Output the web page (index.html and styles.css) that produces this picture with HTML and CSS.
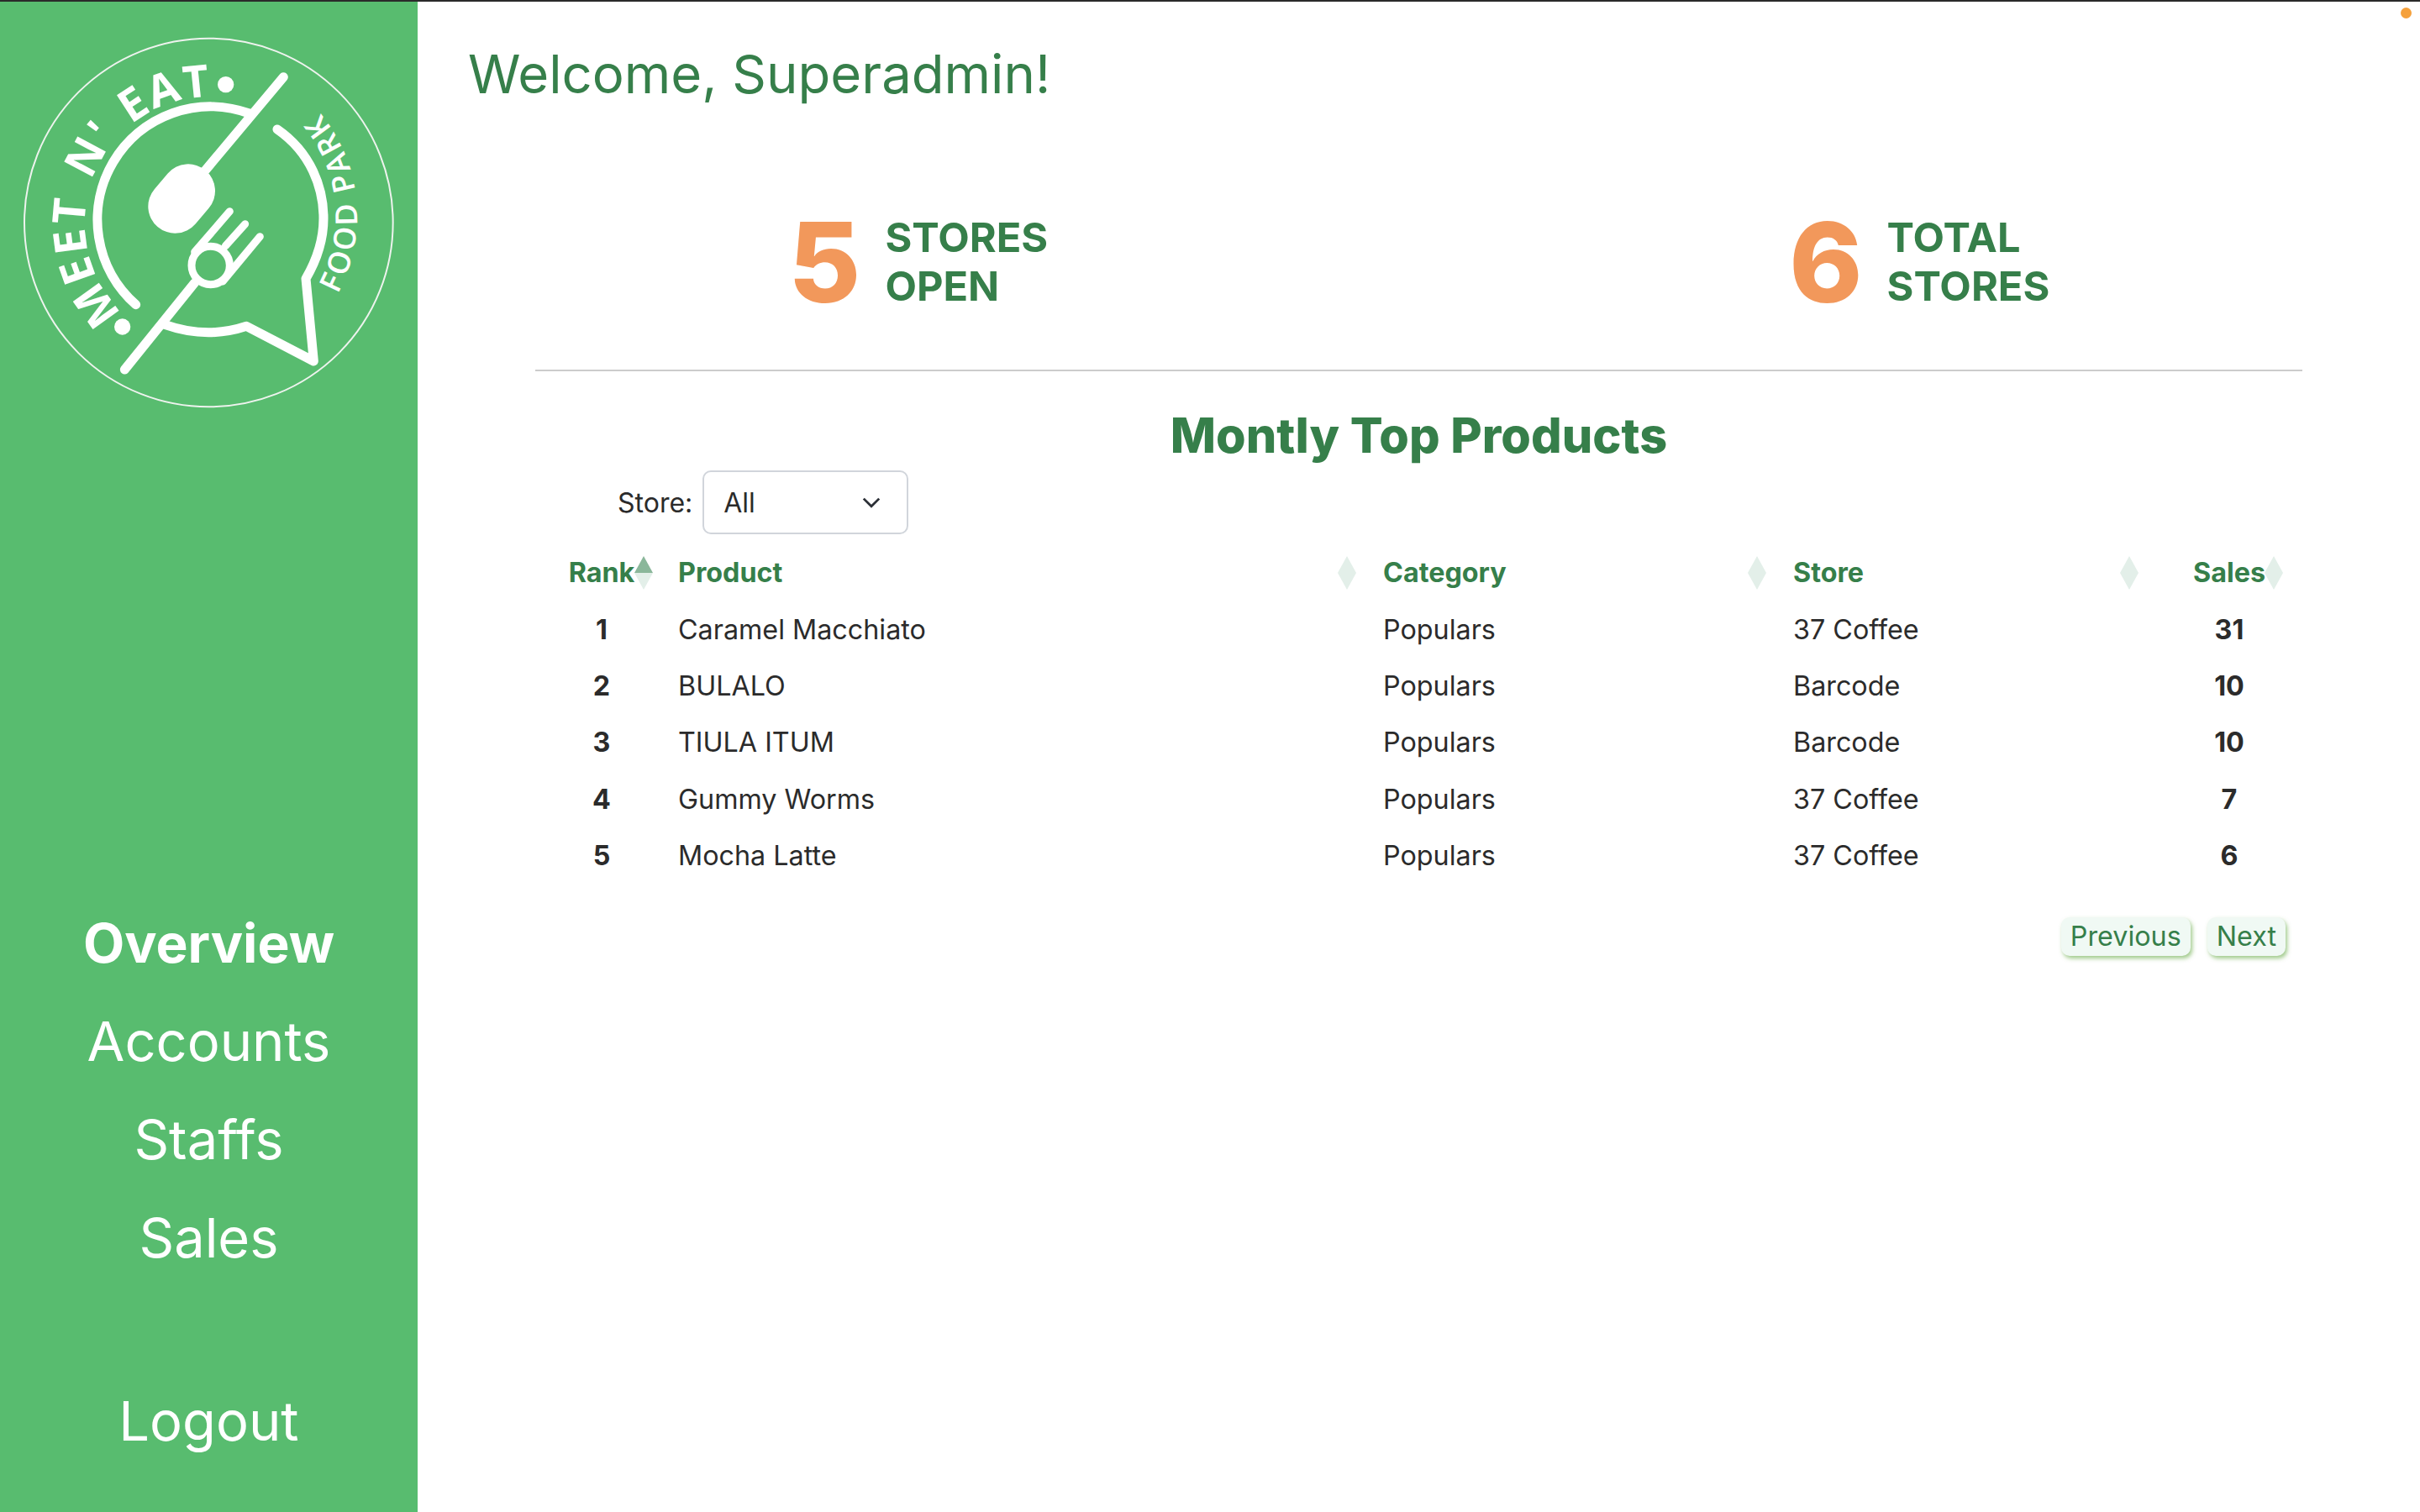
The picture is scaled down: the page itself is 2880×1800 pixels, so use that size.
FILE: index.html
```html
<!DOCTYPE html>
<html lang="en">
<head>
  <meta charset="UTF-8" />
  <meta name="viewport" content="width=device-width, initial-scale=1" />
  <title>Meet N' Eat Food Park - Overview</title>
  <link rel="stylesheet" href="styles.css">
</head>
<body>
  <span class="status-dot"></span>
  <div class="page">

    <!-- Sidebar -->
    <aside class="sidebar">
      <svg class="logo" viewBox="0 6 1491 1554" xmlns="http://www.w3.org/2000/svg">
        <defs>
          <path id="logoTop" d="M438 1117 A450 450 0 0 1 942 387" />
          <path id="logoSide" d="M1205 1050 A582 582 0 0 0 1000 278" />
        </defs>
        <circle class="logo-ring" cx="745" cy="795" r="658" />
        <text class="logo-title"><textPath href="#logoTop">MEET N' EAT</textPath></text>
        <text class="logo-sub"><textPath href="#logoSide">FOOD PARK</textPath></text>
        <circle class="logo-fill" cx="806" cy="302" r="29" />
        <circle class="logo-fill" cx="437" cy="1167" r="29" />
        <path class="logo-line" d="M485 1088 A404 404 0 0 1 890 405" />
        <path class="logo-line" d="M990 462 C1110 545 1155 670 1155 780 C1155 860 1130 930 1092 995 L1120 1290 L880 1165 C790 1195 690 1195 590 1160" />
        <path class="logo-line" d="M1012 275 L730 612" />
        <path class="logo-line" d="M695 1010 L445 1320" />
        <path class="logo-spoon" d="M672 682 L625 737" />
        <circle class="logo-fork" cx="752" cy="948" r="68" />
        <path class="logo-fork" d="M820 755 L695 900 M875 800 L805 878 M928 845 L795 1005" />
      </svg>

      <nav class="nav">
        <a class="nav-link active" href="#">Overview</a>
        <a class="nav-link" href="#">Accounts</a>
        <a class="nav-link" href="#">Staffs</a>
        <a class="nav-link" href="#">Sales</a>
      </nav>
      <a class="nav-link logout" href="#">Logout</a>
    </aside>

    <!-- Contenu -->
    <main class="content">
      <h1 class="welcome">Welcome, Superadmin!</h1>

      <section class="stats">
        <div class="stat">
          <span class="stat-num">5</span>
          <span class="stat-label">STORES<br>OPEN</span>
        </div>
        <div class="stat">
          <span class="stat-num">6</span>
          <span class="stat-label">TOTAL<br>STORES</span>
        </div>
      </section>

      <section class="panel">
        <h2 class="panel-title">Montly Top Products</h2>

        <div class="filter">
          <span class="filter-label">Store:</span>
          <div class="select">
            <span>All</span>
            <svg class="chevron" viewBox="0 0 20 12" xmlns="http://www.w3.org/2000/svg"><path d="M1.5 1.5 L10 10 L18.5 1.5" /></svg>
          </div>
        </div>

        <table class="products">
          <thead>
            <tr>
              <th class="col-rank sort sort-asc">Rank</th>
              <th class="col-product sort">Product</th>
              <th class="col-category sort">Category</th>
              <th class="col-store sort">Store</th>
              <th class="col-sales sort">Sales</th>
            </tr>
          </thead>
          <tbody>
            <tr><td class="col-rank">1</td><td>Caramel Macchiato</td><td>Populars</td><td>37 Coffee</td><td class="col-sales">31</td></tr>
            <tr><td class="col-rank">2</td><td>BULALO</td><td>Populars</td><td>Barcode</td><td class="col-sales">10</td></tr>
            <tr><td class="col-rank">3</td><td>TIULA ITUM</td><td>Populars</td><td>Barcode</td><td class="col-sales">10</td></tr>
            <tr><td class="col-rank">4</td><td>Gummy Worms</td><td>Populars</td><td>37 Coffee</td><td class="col-sales">7</td></tr>
            <tr><td class="col-rank">5</td><td>Mocha Latte</td><td>Populars</td><td>37 Coffee</td><td class="col-sales">6</td></tr>
          </tbody>
        </table>

        <div class="pager">
          <button class="pager-btn">Previous</button>
          <button class="pager-btn">Next</button>
        </div>
      </section>
    </main>
  </div>
</body>
</html>
```

FILE: styles.css
```css
* { box-sizing: border-box; }
html, body { margin: 0; height: 100%; }
body {
  font-family: 'Inter', sans-serif;
  background: #fff;
  color: #2b2b2b;
  border-top: 2px solid #2a2a2a;
}
a { text-decoration: none; color: inherit; }

.status-dot {
  position: absolute; top: 9px; right: 10px;
  width: 13px; height: 13px; border-radius: 50%;
  background: #f5a13c;
}

.page { display: flex; height: 1798px; }

/* Sidebar */
.sidebar {
  flex: 0 0 497px;
  background: #58bc6f;
  color: #fff;
  display: flex; flex-direction: column; align-items: center;
}
.logo { display: block; width: 497px; height: 518px; flex: none; }
.logo-ring { fill: none; stroke: #eef3ee; stroke-width: 6; }
.logo-fill { fill: #fff; }
.logo-line { fill: none; stroke: #fff; stroke-width: 33; stroke-linecap: round; stroke-linejoin: round; }
.logo-spoon { fill: none; stroke: #fff; stroke-width: 192; stroke-linecap: round; }
.logo-fork { fill: none; stroke: #fff; stroke-width: 27; stroke-linecap: round; }
.logo-title { fill: #fff; font-family: 'Open Sans', sans-serif; font-weight: 700; font-size: 160px; letter-spacing: 6px; word-spacing: 16px; }
.logo-sub { fill: #fff; font-family: 'Open Sans', sans-serif; font-weight: 600; font-size: 108px; letter-spacing: 9.5px; }

.nav {
  display: flex; flex-direction: column; align-items: center;
  margin-top: 544px;
}
.nav-link { font-size: 65px; line-height: 117px; font-weight: 400; }
.nav-link.active { font-size: 64px; font-weight: 700; }
.logout { margin-top: 101px; }

/* Contenu */
.content { flex: 1; min-width: 0; }
.welcome {
  margin: 0; padding: 48px 0 0 557px; margin-left: -497px;
  font-size: 63.4px; line-height: 76px; font-weight: 400;
  color: #367f4a;
}

.stats {
  display: grid; grid-template-columns: 1fr 1fr;
  margin-top: 126px;
}
.stat { display: flex; justify-content: center; align-items: center; gap: 29px; }
.stat-num {
  font-size: 132px; line-height: 120px; font-weight: 800;
  color: #f2985b;
}
.stat-label {
  font-size: 48.7px; line-height: 58px; font-weight: 700;
  color: #367f4a;
}

.panel {
  margin: 68px 140px 0;
  border-top: 2px solid #cccccc;
}
.panel-title {
  margin: 40px 0 0; text-align: center;
  font-size: 57.6px; line-height: 72px; font-weight: 800;
  color: #367f4a;
}

.filter {
  display: flex; align-items: center; gap: 12px;
  margin: 6px 0 0 98px;
  font-size: 32px;
}
.select {
  width: 245px; height: 76px;
  padding: 0 31px 0 23px;
  border: 2px solid #d1d5db; border-radius: 10px;
  display: flex; align-items: center; justify-content: space-between;
}
.chevron { width: 22px; height: 13px; fill: none; stroke: #2b2f36; stroke-width: 2.6; }

.products {
  table-layout: fixed; border-collapse: collapse;
  width: 2052px; margin: 12px 0 0 24px;
  font-size: 32.3px;
}
.products th, .products td {
  height: 67.4px; padding: 0 36px;
  text-align: left; font-weight: 400;
}
.products th { position: relative; font-weight: 700; color: #367f4a; }
.products .col-rank { width: 110px; padding: 0; text-align: center; font-weight: 700; }
.products .col-product { width: 839px; }
.products .col-category { width: 488px; }
.products .col-store { width: 443px; }
.products .col-sales { padding: 0 0 0 52px; text-align: center; font-weight: 700; }

/* Tri */
.sort::before, .sort::after {
  content: ""; position: absolute; right: -4px;
  border-left: 11px solid transparent; border-right: 11px solid transparent;
}
.sort::before { top: 14px; border-bottom: 20px solid #e3efe9; }
.sort::after { top: 34px; border-top: 20px solid #e3efe9; }
.sort-asc::before { border-bottom-color: #8ab79a; }
.products .col-rank.sort::before, .products .col-rank.sort::after { right: -6px; }

.pager {
  display: flex; justify-content: flex-end; gap: 20px;
  margin: 40px 20px 0 0;
}
.pager-btn {
  height: 46px; padding: 0 11px;
  border: none; border-radius: 10px;
  background: #f0f9f4; color: #367f4a;
  font-family: inherit; font-size: 32.3px; line-height: 46px;
  box-shadow: 2px 3px 5px rgba(120, 180, 90, 0.7);
  cursor: pointer;
}
```
